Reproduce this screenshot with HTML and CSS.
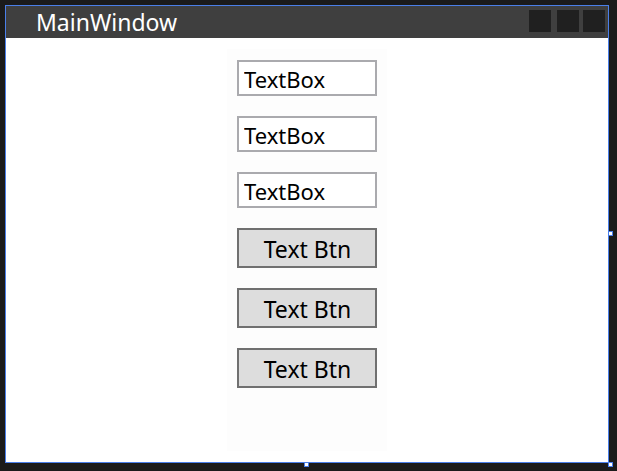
FILE: index.html
```html
<!DOCTYPE html>
<html lang="en">
<head>
    <meta charset="UTF-8">
    <title>MainWindow</title>
    <link rel="stylesheet" href="styles.css">
</head>
<body>
    <div class="window">
        <div class="title-bar">
            <span class="title">MainWindow</span>
            <div class="title-buttons">
                <span class="title-btn min"></span>
                <span class="title-btn"></span>
                <span class="title-btn"></span>
            </div>
        </div>
        <div class="content">
            <div class="panel">
                <input class="textbox" type="text" value="TextBox">
                <input class="textbox" type="text" value="TextBox">
                <input class="textbox" type="text" value="TextBox">
                <button class="btn">Text Btn</button>
                <button class="btn">Text Btn</button>
                <button class="btn">Text Btn</button>
            </div>
        </div>
        <span class="handle handle-right"></span>
        <span class="handle handle-bottom"></span>
        <span class="handle handle-corner"></span>
    </div>
</body>
</html>
```

FILE: styles.css
```css
body {
    margin: 0;
    background-color: #1b1b1b;
    font-family: "Noto Sans", "Open Sans", sans-serif;
    height: 471px;
    overflow: hidden;
}
.window {
    position: relative;
    margin: 5px 0 0 5px;
    width: 604px;
    height: 458px;
    box-sizing: border-box;
    border: 1px solid #4a7fe9;
    display: flex;
    flex-direction: column;
}
.title-bar {
    height: 32px;
    background-color: #3f3f3f;
    display: flex;
    align-items: flex-start;
    justify-content: space-between;
    flex-shrink: 0;
}
.title {
    color: #ffffff;
    font-size: 23px;
    line-height: 32px;
    padding-left: 30px;
}
.title-buttons {
    display: flex;
    gap: 4px;
    margin: 4px 3px 0 0;
}
.title-btn {
    width: 22px;
    height: 22px;
    background-color: #202020;
}
.title-btn.min {
    margin-right: 2px;
}
.content {
    flex: 1;
    background-color: #ffffff;
    display: flex;
    justify-content: center;
    padding: 11px 0;
}
.panel {
    width: 160px;
    background-color: #fdfdfd;
    display: flex;
    flex-direction: column;
    align-items: center;
    gap: 20px;
    padding-top: 11px;
    box-sizing: border-box;
}
.textbox {
    width: 140px;
    height: 36px;
    box-sizing: border-box;
    border: 2px solid #aaaaae;
    background-color: #ffffff;
    font-family: "Noto Sans", "Open Sans", sans-serif;
    font-size: 22px;
    color: #000000;
    padding: 1px 0 0 5px;
    margin: 0;
    outline: none;
}
.btn {
    width: 140px;
    height: 40px;
    box-sizing: border-box;
    border: 2px solid #707070;
    background-color: #dddddd;
    font-family: "Noto Sans", "Open Sans", sans-serif;
    font-size: 23px;
    color: #000000;
    padding: 2px 0 0 1px;
    margin: 0;
}
.handle {
    position: absolute;
    width: 5px;
    height: 5px;
    box-sizing: border-box;
    border: 1px solid #4a7fe9;
    background-color: #ffffff;
}
.handle-right {
    right: -5px;
    top: 225px;
}
.handle-bottom {
    bottom: -5px;
    left: 298px;
}
.handle-corner {
    right: -5px;
    bottom: -5px;
}
```
